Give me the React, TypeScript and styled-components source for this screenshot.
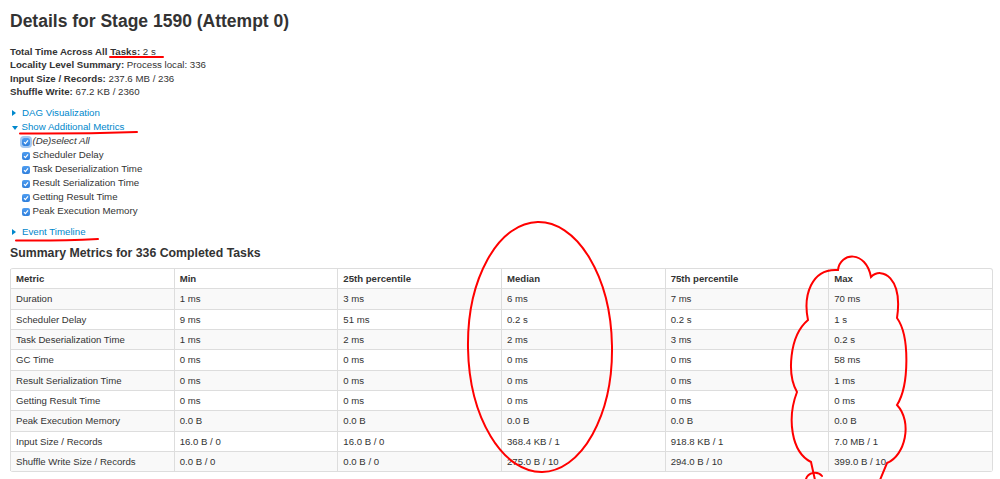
import { ReactElement } from 'react'
import styled, { createGlobalStyle } from 'styled-components'

const GlobalStyle = createGlobalStyle`
  body {
    margin: 0;
    background: #fff;
    color: #333;
    font-family: 'Liberation Sans', Arial, sans-serif;
  }
`

const Page = styled.div`
  position: relative;
  box-sizing: border-box;
  width: 1000px;
  height: 479px;
  overflow: hidden;
  padding: 0 7px 0 10px;
`

const Title = styled.h3`
  margin: 11px 0 0;
  font-size: 17.5px;
  line-height: 21px;
  font-weight: bold;
`

const SummaryList = styled.ul`
  list-style: none;
  margin: 13px 0 0;
  padding: 0;
  font-size: 9.7px;
  line-height: 13.3px;
`

const Label = styled.strong`
  font-weight: bold;
`

const Toggles = styled.div`
  margin-top: 8px;
  font-size: 9.7px;
  line-height: 14px;
`

const Toggle = styled.div<{ $gap?: number }>`
  display: flex;
  align-items: center;
  margin-top: ${({ $gap }) => $gap ?? 0}px;
  color: #0088cc;
`

const ArrowRight = styled.span`
  width: 0;
  height: 0;
  margin: 0 6px 0 2px;
  border-left: 4px solid #0088cc;
  border-top: 3px solid transparent;
  border-bottom: 3px solid transparent;
`

const ArrowDown = styled.span`
  width: 0;
  height: 0;
  margin: 1px 4px 0 1.5px;
  border-top: 4px solid #0088cc;
  border-left: 3px solid transparent;
  border-right: 3px solid transparent;
`

const CheckList = styled.ul`
  list-style: none;
  margin: 0;
  padding: 0 0 0 11.5px;
`

const CheckRow = styled.li<{ $italic?: boolean }>`
  display: flex;
  align-items: center;
  gap: 3px;
  font-style: ${({ $italic }) => ($italic ? 'italic' : 'normal')};
`

const Box = styled.span<{ $focus?: boolean }>`
  display: inline-flex;
  align-items: center;
  justify-content: center;
  width: 8px;
  height: 8px;
  margin-top: 2px;
  border-radius: 2px;
  background: linear-gradient(#4f9df0, #2f7fdc);
  box-shadow: ${({ $focus }) => ($focus ? '0 0 0 2px rgba(90, 155, 230, 0.55)' : 'none')};
`

const Heading = styled.h4`
  margin: 7px 0 0;
  font-size: 12.3px;
  line-height: 15px;
  font-weight: bold;
`

const Table = styled.table`
  width: 983px;
  margin-top: 7px;
  table-layout: fixed;
  border-collapse: separate;
  border-spacing: 0;
  border: 1px solid #ddd;
  border-left: 0;
  border-radius: 3px;
  font-size: 9.6px;
  line-height: 11.3px;
`

const Th = styled.th`
  padding: 4px 5px;
  text-align: left;
  font-weight: bold;
  border-left: 1px solid #ddd;
`

const Row = styled.tr<{ $striped: boolean }>`
  background: ${({ $striped }) => ($striped ? '#f9f9f9' : '#fff')};
`

const Td = styled.td`
  padding: 4px 5px;
  border-top: 1px solid #ddd;
  border-left: 1px solid #ddd;
  white-space: nowrap;
`

const Overlay = styled.svg`
  position: absolute;
  left: 0;
  top: 0;
  pointer-events: none;
`

const Check = () => (
  <svg width="6" height="6" viewBox="0 0 6 6">
    <path d="M1 3.2 L2.4 4.6 L5 1.4" fill="none" stroke="#fff" strokeWidth="1.2" />
  </svg>
)

const metrics = [
  'Scheduler Delay',
  'Task Deserialization Time',
  'Result Serialization Time',
  'Getting Result Time',
  'Peak Execution Memory',
]

const columns = ['Metric', 'Min', '25th percentile', 'Median', '75th percentile', 'Max']

const rows = [
  ['Duration', '1 ms', '3 ms', '6 ms', '7 ms', '70 ms'],
  ['Scheduler Delay', '9 ms', '51 ms', '0.2 s', '0.2 s', '1 s'],
  ['Task Deserialization Time', '1 ms', '2 ms', '2 ms', '3 ms', '0.2 s'],
  ['GC Time', '0 ms', '0 ms', '0 ms', '0 ms', '58 ms'],
  ['Result Serialization Time', '0 ms', '0 ms', '0 ms', '0 ms', '1 ms'],
  ['Getting Result Time', '0 ms', '0 ms', '0 ms', '0 ms', '0 ms'],
  ['Peak Execution Memory', '0.0 B', '0.0 B', '0.0 B', '0.0 B', '0.0 B'],
  ['Input Size / Records', '16.0 B / 0', '16.0 B / 0', '368.4 KB / 1', '918.8 KB / 1', '7.0 MB / 1'],
  ['Shuffle Write Size / Records', '0.0 B / 0', '0.0 B / 0', '275.0 B / 10', '294.0 B / 10', '399.0 B / 10'],
]

export default function App(): ReactElement {
  return (
    <Page>
      <GlobalStyle />
      <Title>Details for Stage 1590 (Attempt 0)</Title>
      <SummaryList>
        <li><Label>Total Time Across All Tasks:</Label> 2 s</li>
        <li><Label>Locality Level Summary:</Label> Process local: 336</li>
        <li><Label>Input Size / Records:</Label> 237.6 MB / 236</li>
        <li><Label>Shuffle Write:</Label> 67.2 KB / 2360</li>
      </SummaryList>

      <Toggles>
        <Toggle><ArrowRight />DAG Visualization</Toggle>
        <Toggle><ArrowDown />Show Additional Metrics</Toggle>
        <CheckList>
          <CheckRow $italic><Box $focus><Check /></Box>(De)select All</CheckRow>
          {metrics.map((m) => (
            <CheckRow key={m}><Box><Check /></Box>{m}</CheckRow>
          ))}
        </CheckList>
        <Toggle $gap={7}><ArrowRight />Event Timeline</Toggle>
      </Toggles>

      <Heading>Summary Metrics for 336 Completed Tasks</Heading>
      <Table>
        <thead>
          <tr>
            {columns.map((c) => <Th key={c}>{c}</Th>)}
          </tr>
        </thead>
        <tbody>
          {rows.map((r, i) => (
            <Row key={r[0]} $striped={i % 2 === 0}>
              {r.map((v, j) => <Td key={j}>{v}</Td>)}
            </Row>
          ))}
        </tbody>
      </Table>

      {/* red pen annotations drawn over the page */}
      <Overlay width="1000" height="479" viewBox="0 0 1000 479">
        <g fill="none" stroke="#f00" strokeWidth="2" strokeLinecap="round">
          <path d="M110 57 L163 57" />
          <path d="M20 133.5 Q80 134 137 132" />
          <path d="M16 240.5 Q60 241 98 239" />
          <ellipse cx="540" cy="347" rx="72" ry="125" transform="rotate(-1 540 347)" />
          <path d="M815 480 L811 462 C791 452 787 418 797 392 C787 375 789 336 808 320 C803 296 811 268 838 270 C840 252 866 250 871 277 C882 266 903 278 897 318 C910 336 909 386 897 405 C913 422 905 456 887 463 L880 480" />
          <path d="M806 479 C808 472 818 471 822 476" />
        </g>
      </Overlay>
    </Page>
  )
}
